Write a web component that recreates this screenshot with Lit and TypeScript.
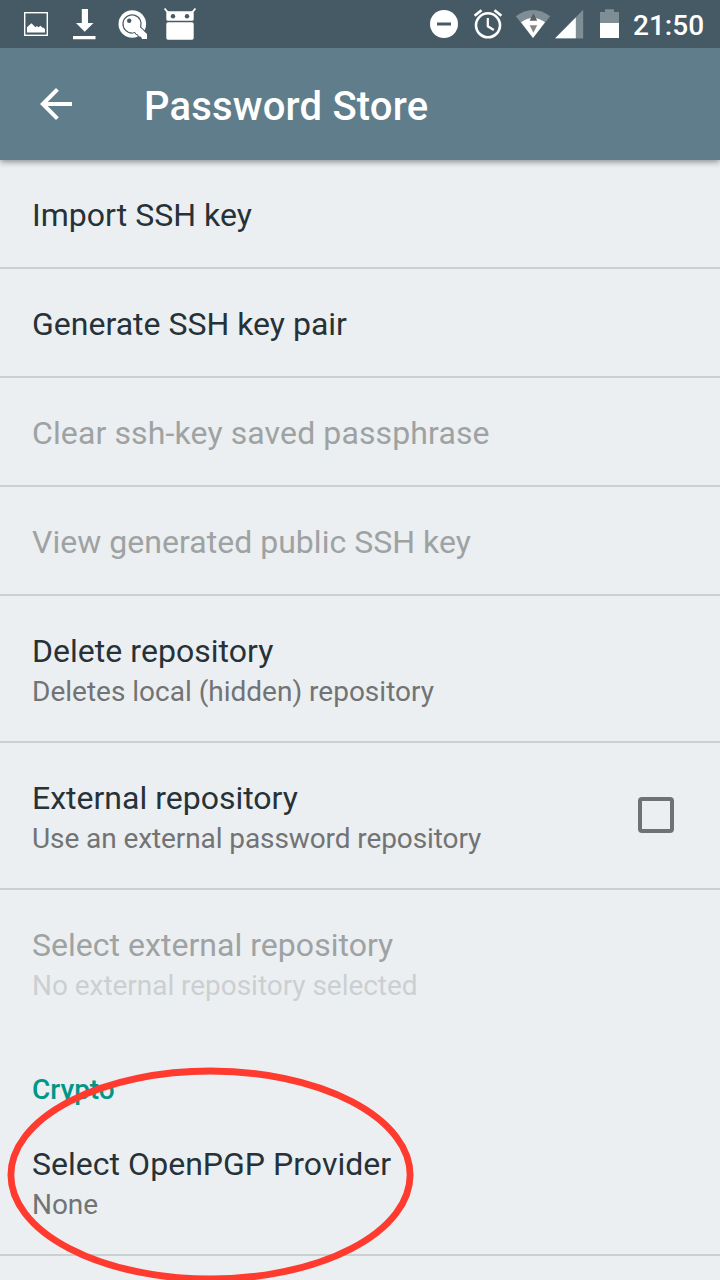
import { LitElement, html, css, nothing } from "lit";
import { customElement, property } from "lit/decorators.js";

@customElement("status-bar")
class StatusBar extends LitElement {
  static styles = css`
    :host { display: flex; justify-content: space-between; height: 48px; padding: 0 16px 0 24px; background: #455a64; color: #fff; box-sizing: border-box; position: relative; z-index: 2; }
    .group { display: flex; }
    svg { display: block; height: 48px; flex: none; }
    .left { gap: 22px; }
    .clock { font: 500 28px/48px Roboto, sans-serif; margin-left: 13px; white-space: nowrap; padding-top: 2px; height: 46px; width: 71px; }
  `;
  render() {
    return html`
      <div class="group left">
        <svg width="26" viewBox="24 0 26 48">
          <rect x="24.7" y="12.7" width="22.6" height="22.6" fill="none" stroke="#fff" stroke-width="1.4" />
          <path d="M27 32.5V27.2L31.4 23.2L35.5 27.2L36.8 26L38.5 27.2L40.5 25.7L42.6 27.8H43.8L45 29.3V32.5Z" fill="#fff" />
        </svg>
        <svg width="24" viewBox="72 0 24 48">
          <path d="M81.8 9H88V23H93.5L84.7 31.7L76 23H81.8ZM73 36H95.5V39.2H73Z" fill="#fff" />
        </svg>
        <svg width="24" viewBox="118 0 24 48" overflow="visible">
          <circle cx="132.3" cy="24" r="13.8" fill="#fff" />
          <path d="M132.3 33.1A9.1 9.1 0 1 1 140.6 27.2L146 32.4" fill="none" stroke="#455a64" stroke-width="1.2" />
          <path d="M140 27.4L147 34V39H142L141 36.8L138.5 36.3L137.8 34L135.4 33.6L134.5 32L136 29Z" fill="#fff" />
          <path d="M132.3 33.1L135 32.5L135.9 34.4L137.8 34.9L138.3 37.1L140.8 37.8" fill="none" stroke="#455a64" stroke-width="1" />
          <circle cx="129.2" cy="20.8" r="2.2" fill="#455a64" />
        </svg>
        <svg width="34" viewBox="164 0 34 48" overflow="visible">
          <path d="M164.6 8.5L168.3 13M195.4 8.5L191.7 13" stroke="#fff" stroke-width="1.9" />
          <path d="M168 11.3H192Q193.7 11.3 193.7 13V19.2Q193.7 20.7 192 20.7H168Q166.3 20.7 166.3 19.2V13Q166.3 11.3 168 11.3ZM168 22.3H192Q193.7 22.3 193.7 24V38Q193.7 39.7 192 39.7H168Q166.3 39.7 166.3 38V24Q166.3 22.3 168 22.3Z" fill="#fff" />
          <circle cx="173" cy="16.2" r="2.2" fill="#455a64" /><circle cx="187" cy="16.2" r="2.2" fill="#455a64" />
        </svg>
      </div>
      <div class="group">
        <svg width="190" viewBox="430 0 190 48" overflow="visible">
          <circle cx="444" cy="24" r="14" fill="#fff" />
          <path d="M437 22.5H451V25.5H437Z" fill="#455a64" />
          <g fill="none" stroke="#fff">
            <circle cx="488" cy="25.3" r="12" stroke-width="2.6" />
            <path d="M487.8 18V26.3L493.8 30" stroke-width="2.2" />
            <path d="M474.6 15.8L481.5 10.3M501.4 15.8L494.5 10.3" stroke-width="2.7" />
          </g>
          <path d="M515.8 16.3Q533 3.7 550.2 16.3L533 38Z" fill="#7f8d94" />
          <path d="M521 22.2Q533 13.7 545 22.2L533 38Z" fill="#fff" />
          <path d="M533.4 13.2L537.2 20.8H529.6Z" fill="#5c5f61" /><path d="M529.6 25.3H537.2L533.4 32.8Z" fill="#858585" />
          <path d="M554.7 38.4L583.2 9.8V38.4Z" fill="#7f8d94" />
          <path d="M555.2 38.2L575.8 17.6V38.2Z" fill="#fff" />
          <path d="M605 9.2H614V12H619V23.2H600V12H605Z" fill="#7f8d94" />
          <path d="M600 23H619V38H600Z" fill="#fff" />
        </svg>
        <div class="clock">21:50</div>
      </div>
    `;
  }
}

@customElement("app-toolbar")
class AppToolbar extends LitElement {
  static styles = css`
    :host { display: flex; align-items: center; height: 112px; padding: 0 40px; gap: 72px; background: #607d8b; color: #fff; box-sizing: border-box; box-shadow: 0 2px 6px rgba(0, 0, 0, .4); z-index: 1; position: relative; }
    svg { display: block; }
    h1 { margin: 0; padding-top: 5px; font: 500 40px/47px Roboto, sans-serif; letter-spacing: .19px; white-space: nowrap; }
  `;
  render() {
    return html`
      <svg width="32" height="32" viewBox="0 0 32 32"><path d="M32 14H7.7L18.9 2.8L16 0L0 16L16 32L18.8 29.2L7.7 18H32Z" fill="#fff" /></svg>
      <h1>Password Store</h1>
    `;
  }
}

@customElement("preference-row")
class PreferenceRow extends LitElement {
  @property() heading = "";
  @property() summary = "";
  @property({ type: Boolean }) off = false;
  @property({ type: Boolean }) checkable = false;
  @property({ type: Boolean }) divided = false;

  static styles = css`
    :host { display: block; }
    .row { display: flex; justify-content: space-between; align-items: center; padding: 34px 46px 30px 32px; }
    .divided { border-bottom: 2px solid #cbd0d3; }
    .heading { font: 400 32px/43px Roboto, sans-serif; letter-spacing: .03px; color: #263238; white-space: nowrap; }
    .summary { font: 400 28px/38px Roboto, sans-serif; letter-spacing: -.04px; color: #727374; white-space: nowrap; }
    :host(.wide) .heading { letter-spacing: .12px; }
    :host(.tight) .heading { letter-spacing: 0; }
    :host(.tight) .summary { letter-spacing: -.09px; }
    :host(.plain) .summary { letter-spacing: 0; }
    .off .heading { color: #9fa2a3; }
    .off .summary { color: #cbcfd1; }
    .box { width: 36px; height: 36px; margin-bottom: 6px; border: 4px solid #6f7172; border-radius: 4px; box-sizing: border-box; }
  `;
  render() {
    return html`
      <div class="row ${this.off ? "off" : ""} ${this.divided ? "divided" : ""}">
        <div>
          <div class="heading">${this.heading}</div>
          ${this.summary ? html`<div class="summary">${this.summary}</div>` : nothing}
        </div>
        ${this.checkable ? html`<div class="box" role="checkbox" aria-checked="false"></div>` : nothing}
      </div>
    `;
  }
}

@customElement("app-root")
class AppRoot extends LitElement {
  static styles = css`
    :host { display: flex; flex-direction: column; position: relative; width: 720px; height: 1280px; overflow: hidden; background: #ebeff1; font-family: Roboto, sans-serif; }
    status-bar, app-toolbar, preference-row, .category { flex: none; }
    .category { height: 74px; box-sizing: border-box; padding: 36px 32px 0; font: 500 28px/38px Roboto, sans-serif; color: #009688; }
    .marker { position: absolute; left: 0; top: 1060px; width: 430px; height: 220px; }
  `;
  render() {
    return html`
      <status-bar></status-bar>
      <app-toolbar></app-toolbar>
      <preference-row divided heading="Import SSH key"></preference-row>
      <preference-row class="tight" divided heading="Generate SSH key pair"></preference-row>
      <preference-row class="wide" divided off heading="Clear ssh-key saved passphrase"></preference-row>
      <preference-row divided off heading="View generated public SSH key"></preference-row>
      <preference-row class="plain" divided heading="Delete repository" summary="Deletes local (hidden) repository"></preference-row>
      <preference-row class="tight" divided checkable heading="External repository" summary="Use an external password repository"></preference-row>
      <preference-row off heading="Select external repository" summary="No external repository selected"></preference-row>
      <div class="category">Crypto</div>
      <preference-row divided heading="Select OpenPGP Provider" summary="None"></preference-row>
      <svg class="marker" viewBox="0 1060 430 220"><ellipse cx="210.5" cy="1175" rx="199.6" ry="104" fill="none" stroke="#ff3b30" stroke-width="6.8" /></svg>
    `;
  }
}
